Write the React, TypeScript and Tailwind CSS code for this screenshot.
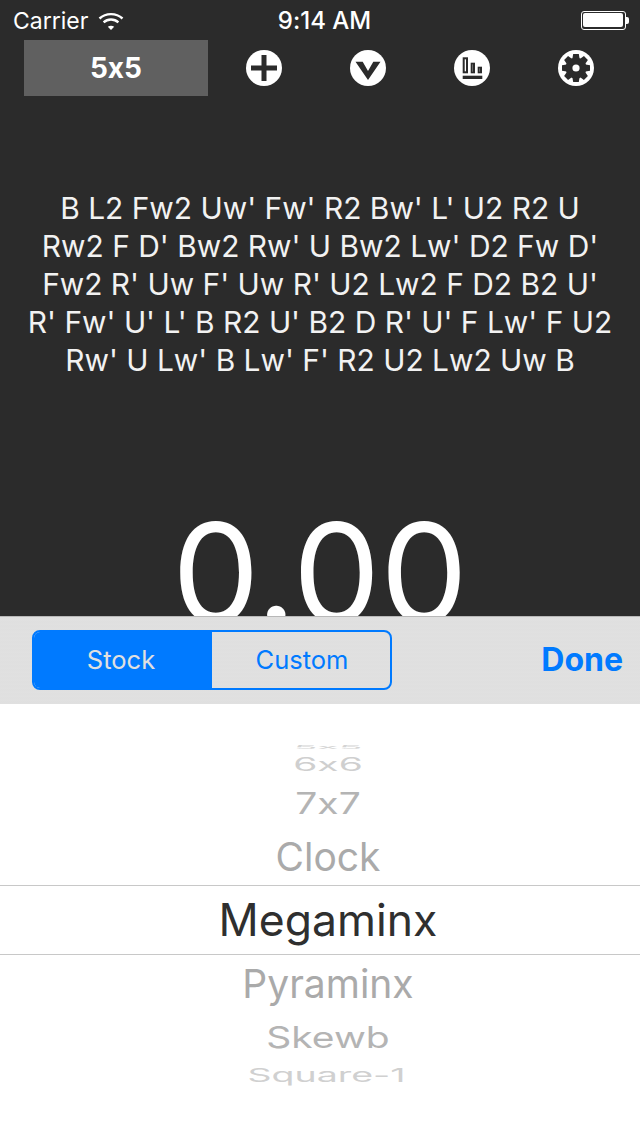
// App.tsx
const scrambleLines = [
  "B L2 Fw2 Uw' Fw' R2 Bw' L' U2 R2 U",
  "Rw2 F D' Bw2 Rw' U Bw2 Lw' D2 Fw D'",
  "Fw2 R' Uw F' Uw R' U2 Lw2 F D2 B2 U'",
  "R' Fw' U' L' B R2 U' B2 D R' U' F Lw' F U2",
  "Rw' U Lw' B Lw' F' R2 U2 Lw2 Uw B",
];

function WifiIcon() {
  return (
    <svg width="26" height="18" viewBox="0 0 26 18" fill="none" stroke="white" strokeWidth="2.4">
      <path d="M1.5 6.5C7.8 0.6 18.2 0.6 24.5 6.5" />
      <path d="M5.6 10.4C9.8 6.6 16.2 6.6 20.4 10.4" />
      <path d="M13 18L9.8 14.8C11.6 13.4 14.4 13.4 16.2 14.8Z" fill="white" stroke="none" />
    </svg>
  );
}

function PlusIcon() {
  return (
    <svg width="36" height="36" viewBox="0 0 36 36">
      <circle cx="18" cy="18" r="18" fill="white" />
      <rect x="5" y="15.5" width="26" height="5" fill="#2b2b2b" />
      <rect x="15.5" y="5" width="5" height="26" fill="#2b2b2b" />
    </svg>
  );
}

function VIcon() {
  return (
    <svg width="36" height="36" viewBox="0 0 36 36">
      <circle cx="18" cy="18" r="18" fill="white" />
      <path d="M5.5 11.7H12.7L18 21L23.3 11.7H30.5L18 30Z" fill="#2b2b2b" />
    </svg>
  );
}

function BarsIcon() {
  return (
    <svg width="36" height="36" viewBox="0 0 36 36">
      <circle cx="18" cy="18" r="18" fill="white" />
      <g fill="white" stroke="#2b2b2b" strokeWidth="2">
        <rect x="9.7" y="8.3" width="3.3" height="14" />
        <rect x="17.7" y="13.7" width="2.3" height="8.6" />
        <rect x="24.7" y="17.7" width="2.3" height="4.6" />
      </g>
      <rect x="8.7" y="25.7" width="19.6" height="3.3" fill="#2b2b2b" />
    </svg>
  );
}

function GearIcon() {
  const teeth = [0, 45, 90, 135, 180, 225, 270, 315];
  return (
    <svg width="36" height="36" viewBox="0 0 36 36">
      <circle cx="18" cy="18" r="18" fill="white" />
      <circle cx="18" cy="18" r="10.5" fill="#2b2b2b" />
      {teeth.map((a) => (
        <path key={a} d="M14.4 8.5L15.2 4H20.8L21.6 8.5Z" fill="#2b2b2b" transform={`rotate(${a} 18 18)`} />
      ))}
      <circle cx="18" cy="18" r="3.6" fill="white" />
    </svg>
  );
}

export default function App() {
  return (
    <div className="h-[1136px] w-[640px] overflow-hidden bg-[#2b2b2b] font-['Inter',sans-serif] text-white [font-feature-settings:'calt'_0]">
      <div className="h-[616px] overflow-hidden">
        {/* status bar */}
        <div className="flex h-10 items-center justify-between pl-[13px] pr-[11px]">
          <div className="flex w-[207px] items-center gap-[10px] pt-[2px] text-[23px]">
            Carrier
            <WifiIcon />
          </div>
          <div className="pt-[2px] text-[24px] font-medium">9:14 AM</div>
          <div className="flex w-[200px] items-center justify-end">
            <div className="h-[19px] w-[45px] rounded-[3px] border border-white p-[1.5px]">
              <div className="h-full w-full rounded-[2px] bg-white" />
            </div>
            <div className="h-[7px] w-[3px] rounded-r-[2px] bg-white" />
          </div>
        </div>

        {/* toolbar */}
        <div className="flex h-14 items-center pl-6">
          <div className="mr-1 flex h-14 w-[184px] items-center justify-center bg-[#606060] text-[28px] font-bold">5x5</div>
          <div className="flex w-[104px] justify-center"><PlusIcon /></div>
          <div className="flex w-[104px] justify-center"><VIcon /></div>
          <div className="flex w-[104px] justify-center"><BarsIcon /></div>
          <div className="flex w-[104px] justify-center"><GearIcon /></div>
        </div>

        {/* scramble */}
        <div className="mt-[93px] text-center text-[29.9px] leading-[38px] text-[#f2f2f2]">
          {scrambleLines.map((line) => (
            <div key={line}>{line}</div>
          ))}
        </div>

        {/* timer */}
        <div className="mt-[109px] text-center text-[139px] font-normal leading-[170px]">0.00</div>
      </div>

      {/* picker sheet */}
      <div className="h-[520px] bg-white">
        <div className="flex h-[88px] items-center justify-between border-t border-[#b8b8b8] bg-[#e0e0e0] bg-[repeating-linear-gradient(0deg,#e0e0e0_0px,#dfdfdf_2px,#e1e1e1_4px)] pb-[1px] pl-8 pr-[17px]">
          <div className="flex h-[60px] w-[360px] overflow-hidden rounded-lg border-2 border-[#007aff] text-[25.5px]">
            <div className="flex w-[178px] items-center justify-center bg-[#007aff] pr-1 text-[#e0e0e0]">Stock</div>
            <div className="flex flex-1 items-center justify-center pl-[2px] text-[#007aff]">Custom</div>
          </div>
          <div className="text-[32px] font-bold text-[#007aff]">Done</div>
        </div>

        <div className="flex flex-col items-center pt-[38px] text-[39px] text-[#aaaaaa]">
          <div className="flex h-[10px] w-full items-center justify-center overflow-hidden pl-4">
            <span className="scale-y-[0.14] text-[#d4d4d4]">5x5</span>
          </div>
          <div className="flex h-[25px] w-full items-center justify-center overflow-hidden pl-4">
            <span className="scale-y-[0.47] text-[#cfcfcf]">6x6</span>
          </div>
          <div className="flex h-[52px] w-full items-center justify-center pl-4">
            <span className="scale-y-[0.75] text-[#b4b4b4]">7x7</span>
          </div>
          <div className="flex h-[56px] w-full items-center justify-center pl-4">Clock</div>
          <div className="flex h-[70px] w-full items-center justify-center border-y border-[#c8c8c8] pl-4 text-[44.5px] text-[#2f2f2f]">Megaminx</div>
          <div className="flex h-[58px] w-full items-center justify-center pl-4">Pyraminx</div>
          <div className="flex h-[48px] w-full items-center justify-center pl-4">
            <span className="scale-y-[0.75] text-[#b4b4b4]">Skewb</span>
          </div>
          <div className="flex h-[28px] w-full items-center justify-center overflow-hidden pl-[13px] text-[37.5px]">
            <span className="scale-y-[0.5] text-[#d0d0d0]">Square-1</span>
          </div>
        </div>
      </div>
    </div>
  );
}
